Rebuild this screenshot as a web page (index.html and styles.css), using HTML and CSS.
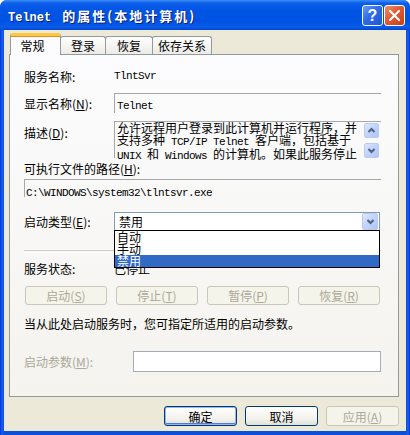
FILE: index.html
```html
<!DOCTYPE html>
<html lang="zh-CN">
<head>
    <meta charset="UTF-8">
    <title>Telnet 的属性(本地计算机)</title>
    <link rel="stylesheet" href="styles.css">
</head>
<body>
    <div class="window">
        <div class="titlebar">
            <span class="title"><span class="title-en">Telnet</span>的属性(本地计算机)</span>
            <div class="caption-btns">
                <span class="cap-btn help">?</span>
                <span class="cap-btn close">
                    <svg width="19" height="19" viewBox="0 0 19 19"><path d="M5 5 L14 14 M14 5 L5 14" stroke="#fff" stroke-width="2.2" stroke-linecap="round" fill="none"/></svg>
                </span>
            </div>
        </div>
        <div class="client">
            <div class="tabs">
                <div class="tab active">常规</div>
                <div class="tab t2">登录</div>
                <div class="tab t3">恢复</div>
                <div class="tab t4">依存关系</div>
            </div>
            <div class="panel">
                <div class="row row-name">
                    <span class="label">服务名称:</span>
                    <span class="mono">TlntSvr</span>
                </div>
                <div class="row row-display">
                    <span class="label">显示名称(<u>N</u>):</span>
                    <div class="edit"><span class="mono">Telnet</span></div>
                </div>
                <div class="row row-desc">
                    <span class="label">描述(<u>D</u>):</span>
                    <div class="edit desc">
                        <div class="desc-text">允许远程用户登录到此计算机并运行程序，并<br>支持多种<span class="mono"> TCP/IP Telnet </span>客户端，包括基于<br><span class="mono">UNIX </span>和<span class="mono"> Windows </span>的计算机。如果此服务停止</div>
                        <div class="scroll">
                            <span class="sbtn"><svg width="13" height="13" viewBox="0 0 13 13"><path d="M3.5 8 L6.5 5 L9.5 8" stroke="#4d6185" stroke-width="2" fill="none"/></svg></span>
                            <span class="sbtn"><svg width="13" height="13" viewBox="0 0 13 13"><path d="M3.5 5 L6.5 8 L9.5 5" stroke="#4d6185" stroke-width="2" fill="none"/></svg></span>
                        </div>
                    </div>
                </div>
                <div class="row row-pathlabel">
                    <span>可执行文件的路径(<u>H</u>):</span>
                </div>
                <div class="row row-path">
                    <div class="edit"><span class="mono">C:\WINDOWS\system32\tlntsvr.exe</span></div>
                </div>
                <div class="row row-start">
                    <span class="label">启动类型(<u>E</u>):</span>
                    <div class="combo">
                        <span class="combo-text">禁用</span>
                        <span class="combo-btn"><svg width="13" height="13" viewBox="0 0 13 13"><path d="M3.5 5 L6.5 8 L9.5 5" stroke="#4d6185" stroke-width="2" fill="none"/></svg></span>
                        <ul class="droplist">
                            <li>自动</li>
                            <li>手动</li>
                            <li class="selected">禁用</li>
                        </ul>
                    </div>
                </div>
                <div class="separator"></div>
                <div class="row row-status">
                    <span class="label">服务状态:</span>
                    <span>已停止</span>
                </div>
                <div class="row row-buttons">
                    <span class="btn disabled">启动(<u>S</u>)</span>
                    <span class="btn disabled">停止(<u>T</u>)</span>
                    <span class="btn disabled">暂停(<u>P</u>)</span>
                    <span class="btn disabled">恢复(<u>R</u>)</span>
                </div>
                <div class="row row-note">
                    <span>当从此处启动服务时，您可指定所适用的启动参数。</span>
                </div>
                <div class="row row-param">
                    <span class="label param-label">启动参数(<u>M</u>):</span>
                    <div class="edit param"></div>
                </div>
            </div>
            <div class="footer">
                <span class="btn default">确定</span>
                <span class="btn">取消</span>
                <span class="btn disabled">应用(<u>A</u>)</span>
            </div>
        </div>
    </div>
</body>
</html>
```

FILE: styles.css
```css
html,
body,
ul,
li {
    margin: 0;
    padding: 0;
}

ul {
    list-style: none;
}

body {
    font-family: "Noto Sans CJK SC", "Liberation Sans", sans-serif;
    font-size: 12px;
    color: #000;
}

.window {
    width: 410px;
    height: 435px;
    display: flex;
    flex-direction: column;
    background: linear-gradient(to right, #0831d9 0, #1660f0 2px, #0a50dc 4px, #0a50dc 406px, #1660f0 408px, #0831d9 410px);
    border-radius: 7px 7px 0 0;
    overflow: hidden;
}

.titlebar {
    height: 30px;
    flex: none;
    display: flex;
    align-items: center;
    justify-content: space-between;
    padding: 0 5px 0 8px;
    background: linear-gradient(#3d8ff9 0, #0e5fea 3px, #0055e5 10px, #0053e1 22px, #0a5ceb 27px, #0046cf 30px);
}

.title {
    color: #fff;
    font-family: "Noto Sans CJK SC", sans-serif;
    font-weight: bold;
    font-size: 13px;
    letter-spacing: 2px;
    text-shadow: 1px 1px #0a1f7a;
    margin-top: 1px;
}

.title-en {
    font-family: "Liberation Mono", monospace;
    font-size: 12px;
    letter-spacing: 0;
    margin-right: 11px;
}

.caption-btns {
    display: flex;
    gap: 1px;
    margin-top: 1px;
}

.cap-btn {
    width: 21px;
    height: 21px;
    box-sizing: border-box;
    border: 1px solid #fff;
    border-radius: 3px;
    display: flex;
    align-items: center;
    justify-content: center;
}

.cap-btn.help {
    background: linear-gradient(135deg, #6b9cf8 0, #2e6ae8 45%, #1a56d8 100%);
    color: #fff;
    font-family: "Liberation Sans", sans-serif;
    font-weight: bold;
    font-size: 16px;
}

.cap-btn.close {
    background: linear-gradient(135deg, #f0906b 0, #e05a31 45%, #c9401c 100%);
}

.client {
    flex: 1;
    margin: 0 4px 4px 4px;
    background: #ece9d8;
    padding: 3px 7px 0 5px;
}

.tabs {
    height: 21px;
    display: flex;
    align-items: flex-end;
    padding-left: 1px;
}

.tab {
    height: 18px;
    box-sizing: border-box;
    border: 1px solid #919b9c;
    border-bottom: none;
    border-radius: 3px 3px 0 0;
    background: linear-gradient(#fff, #ecebe6);
    display: flex;
    align-items: center;
    justify-content: center;
    margin-left: -1px;
}

.tab.active {
    width: 51px;
    height: 22px;
    margin-bottom: -1px;
    margin-left: 0;
    background: #fcfcfe;
    border-top: 3px solid #ffc83c;
    box-shadow: inset 0 1px #e68b2c;
    position: relative;
    z-index: 1;
    padding-right: 6px;
}

.tab.t2 {
    width: 46px;
}

.tab.t3 {
    width: 48px;
}

.tab.t4 {
    width: 60px;
}

.panel {
    height: 343px;
    box-sizing: border-box;
    border: 1px solid #919b9c;
    background: linear-gradient(#fcfcfe, #f4f3ee);
    padding: 11px 17px 0 14px;
}

.row {
    display: flex;
    align-items: center;
}

.label {
    width: 90px;
    flex: none;
}

.mono {
    font-family: "Liberation Mono", monospace;
    font-size: 11px;
    letter-spacing: -0.6px;
}

.edit {
    flex: 1;
    align-self: stretch;
    box-sizing: border-box;
    border-top: 1px solid #a7a6aa;
    border-left: 1px solid #a7a6aa;
    padding: 1px 0 0 2px;
}

.row-name {
    height: 20px;
}

.row-display {
    height: 20px;
    margin-top: 7px;
    margin-left: -1px;
}

.row-display .label {
    margin-left: 1px;
}

.row-desc {
    height: 37px;
    margin-top: 8px;
    align-items: flex-start;
    margin-left: -1px;
}

.row-desc .label {
    margin: 3px 0 0 1px;
}

.desc {
    display: flex;
    justify-content: space-between;
    padding: 0 0 0 2px;
}

.desc-text {
    line-height: 12px;
    white-space: nowrap;
}

.scroll {
    display: flex;
    flex-direction: column;
    gap: 5px;
    padding: 1px 2px 0 0;
}

.sbtn,
.combo-btn {
    width: 15px;
    height: 15px;
    box-sizing: border-box;
    border: 1px solid #b9cbf3;
    border-radius: 2px;
    background: linear-gradient(135deg, #dde8fd 0, #c1d3fb 50%, #b0c6f5 100%);
    display: flex;
    align-items: center;
    justify-content: center;
}

.row-pathlabel {
    height: 14px;
    margin-top: 3px;
}

.row-path {
    height: 18px;
    margin-top: 4px;
}

.row-path .edit {
    padding: 2px 0 0 1px;
}

.row-start {
    height: 19px;
    margin-top: 15px;
}

.combo {
    flex: 1;
    align-self: stretch;
    margin-right: 1px;
    box-sizing: border-box;
    border: 1px solid #7f9db9;
    background: #fff;
    display: flex;
    align-items: center;
    justify-content: space-between;
    padding: 0 1px 0 4px;
    position: relative;
}

.combo-btn {
    height: 17px;
    width: 16px;
}

.droplist {
    position: absolute;
    top: 100%;
    left: -1px;
    right: -1px;
    height: 38px;
    box-sizing: border-box;
    border: 1px solid #000;
    background: #fff;
    z-index: 2;
    padding-top: 0;
}

.droplist li {
    height: 12px;
    line-height: 12px;
    padding-left: 2px;
}

.droplist li.selected {
    background: #316ac5;
    color: #fff;
}

.separator {
    margin-top: 19px;
    height: 1px;
    border-top: 1px solid #d0d0bf;
    border-bottom: 1px solid #fff;
}

.row-status {
    height: 16px;
    margin-top: 7px;
}

.row-buttons {
    height: 19px;
    margin-top: 10px;
    margin-left: 1px;
    gap: 9px;
}

.btn {
    height: 100%;
    box-sizing: border-box;
    border: 1px solid #003c74;
    border-radius: 3px;
    background: linear-gradient(#fff 0, #f4f3ee 60%, #e3e1d6 100%);
    display: flex;
    align-items: center;
    justify-content: center;
}

.row-buttons .btn {
    width: 82px;
}

.btn.disabled {
    border-color: #c9c7ba;
    background: #f5f4ea;
    color: #aca899;
}

.btn.default {
    box-shadow: inset 0 0 0 1px #99b4f0, inset 0 -1px 0 1px #4f7be0;
}

.row-note {
    height: 14px;
    margin-top: 11px;
}

.row-param {
    height: 21px;
    margin-top: 21px;
}

.param-label {
    width: 109px;
    color: #aca899;
}

.edit.param {
    border: 1px solid #a5acb5;
    background: #fff;
}

.footer {
    display: flex;
    justify-content: flex-end;
    gap: 8px;
    margin-top: 9px;
    height: 20px;
}

.footer .btn {
    width: 73px;
}
```
